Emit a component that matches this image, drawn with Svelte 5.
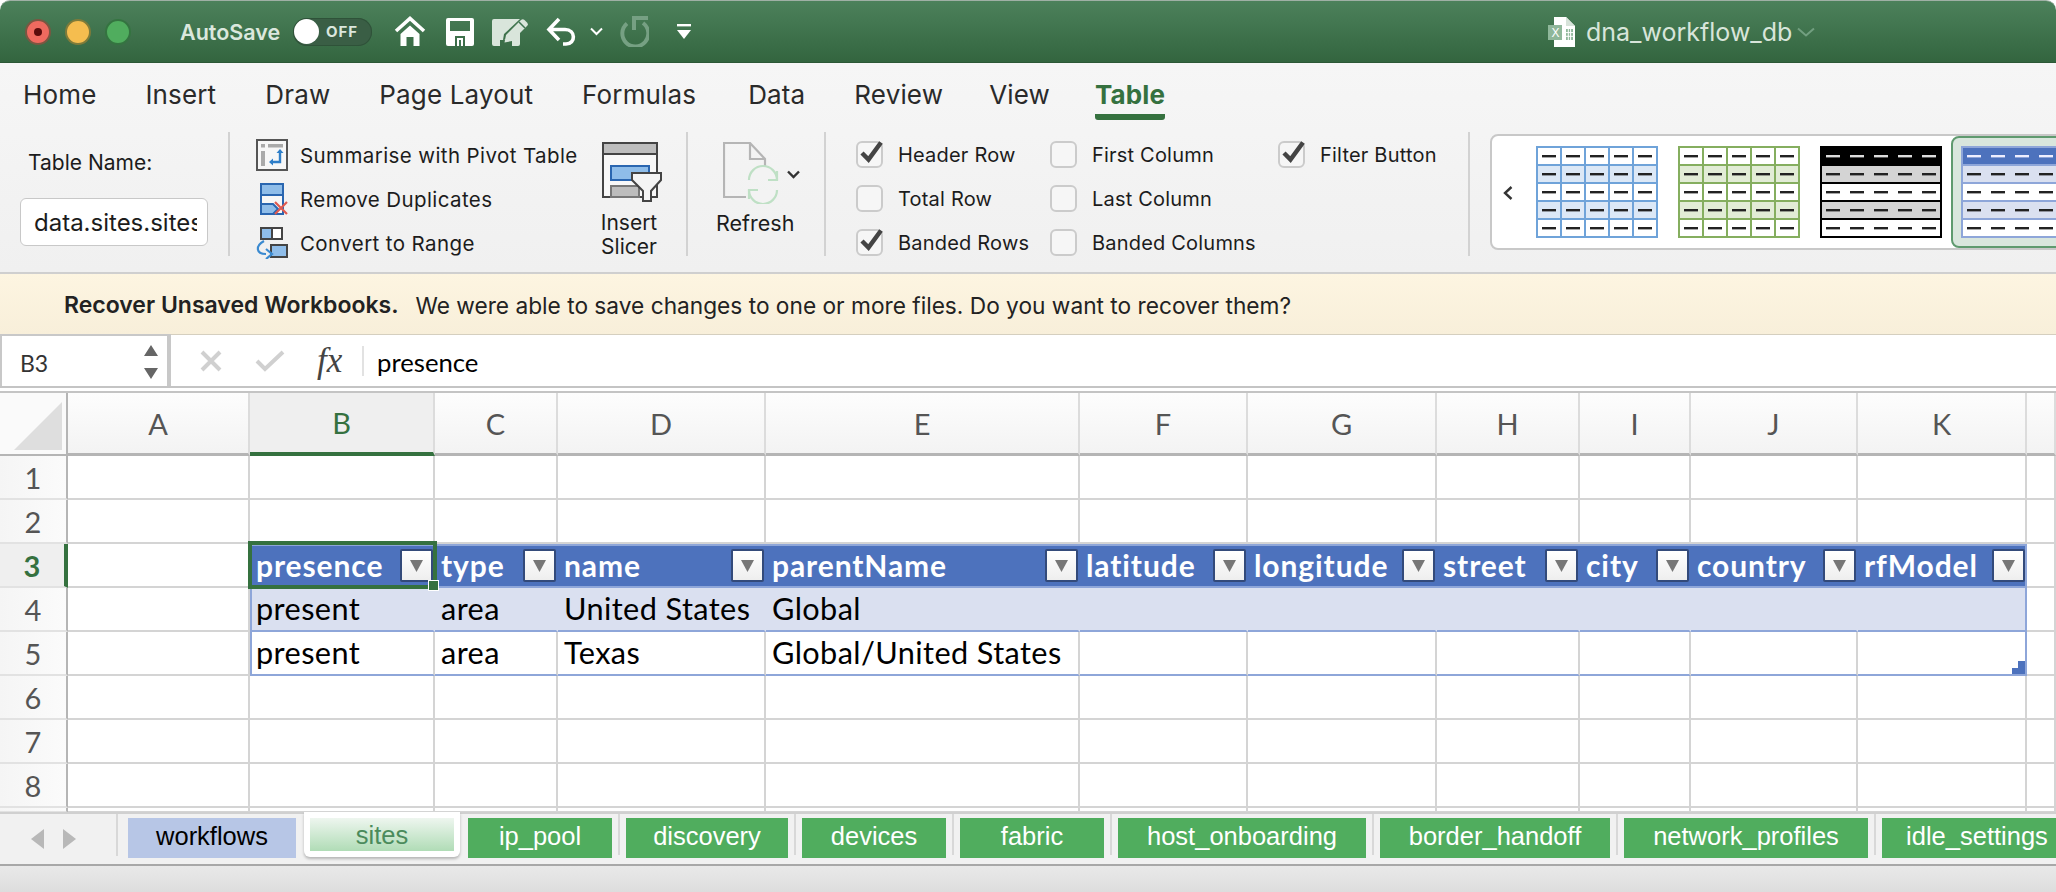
<script>
  const tabs = ['Home','Insert','Draw','Page Layout','Formulas','Data','Review','View'];
  const letters = ['A','B','C','D','E','F','G','H','I','J','K'];
  const headers = ['presence','type','name','parentName','latitude','longitude','street','city','country','rfModel'];
  const rowData = {
    4: ['present','area','United States','Global','','','','','',''],
    5: ['present','area','Texas','Global/United States','','','','','','']
  };
  const rows = [1,2,3,4,5,6,7,8,9];
  const sheets = [
    {n:'ip_pool',w:144},{n:'discovery',w:162},{n:'devices',w:144},{n:'fabric',w:144},
    {n:'host_onboarding',w:248},{n:'border_handoff',w:230},{n:'network_profiles',w:244},{n:'idle_settings',w:190}
  ];
  const thumbs = [
    {border:'#6fa3d9',band:'#dce8f6',head:null,dash:'#222',hdash:'#222',v:true,line:'#6fa3d9'},
    {border:'#85ae5f',band:'#e2ecd6',head:null,dash:'#222',hdash:'#222',v:true,line:'#85ae5f'},
    {border:'#000',band:'#d4d4d4',head:'#000',dash:'#222',hdash:'#ddd',v:false,line:'#000'},
    {border:'#8ea6d9',band:'#dae0f0',head:'#4d72bd',dash:'#222',hdash:'#eef',v:false,line:'#8ea6d9'}
  ];
  const five = [0,1,2,3,4];
</script>

{#snippet check(on)}
  <svg class="cb" width="28" height="30" viewBox="0 0 28 30">
    <rect x="1" y="2" width="25" height="25" rx="5" fill="#f6f6f6" stroke="#cbcbcb" stroke-width="2"/>
    {#if on}<path d="M6 13 L12.5 19.5 L25 2.5" fill="none" stroke="#444" stroke-width="4.5"/>{/if}
  </svg>
{/snippet}

{#snippet thumb(t)}
  <svg class="thumb" width="122" height="92" viewBox="0 0 122 92">
    <rect width="122" height="92" fill="#fff"/>
    {#each five as r}
      {#if r === 0 && t.head}<rect x="1" y="1" width="120" height="18" fill={t.head}/>{/if}
      {#if r % 2 === 1}<rect x="1" y={1 + r*18} width="120" height="18" fill={t.band}/>{/if}
      {#each five as c}
        <rect x={6 + c*24} y={9 + r*18} width="14" height="2.4" fill={r === 0 ? t.hdash : t.dash}/>
      {/each}
      {#if r > 0}<rect x="0" y={r*18} width="122" height="2" fill={t.line}/>{/if}
    {/each}
    {#if t.v}
      {#each [1,2,3,4] as c}<rect x={c*24} y="0" width="2" height="92" fill={t.line}/>{/each}
    {/if}
    <rect x="1" y="1" width="120" height="90" fill="none" stroke={t.border} stroke-width="2"/>
  </svg>
{/snippet}

{#snippet funnelBtn()}
  <span class="fbtn"><svg width="15" height="15" viewBox="0 0 15 15"><path d="M1 2 H14 L7.5 14 Z" fill="#777"/></svg></span>
{/snippet}

<div class="app">
  <header class="titlebar">
    <div class="lights">
      <span class="light red"><i></i></span><span class="light amber"></span><span class="light green"></span>
    </div>
    <span class="autosave">AutoSave</span>
    <span class="toggle"><span class="knob"></span><span class="off">OFF</span></span>
    <svg class="q-home" width="32" height="30" viewBox="0 0 32 30"><path d="M2 15 L16 2.5 L30 15" fill="none" stroke="#fff" stroke-width="3.6"/><path d="M6.5 18 L16 9.5 L25.5 18 V30 H19.5 V21 H12.5 V30 H6.5 Z" fill="#fff"/></svg>
    <svg class="q-save" width="28" height="28" viewBox="0 0 28 28"><path fill-rule="evenodd" d="M2 0 H26 a2 2 0 0 1 2 2 V26 a2 2 0 0 1 -2 2 H2 a2 2 0 0 1 -2 -2 V2 a2 2 0 0 1 2 -2 Z M4 3 V13 H24 V3 Z M9 28 H19 V18 H9 Z" fill="#fff"/><rect x="11" y="20" width="6" height="8" fill="#fff"/><rect x="13" y="22" width="2" height="6" fill="#3d7350"/></svg>
    <svg class="q-edit" width="36" height="28" viewBox="0 0 36 28"><path fill-rule="evenodd" d="M2 1 H28 L12 16 L11 22 L18 21 L28 12 V26 a2 2 0 0 1 -2 2 H20 V22 H8 V28 H2 a2 2 0 0 1 -2 -2 V3 a2 2 0 0 1 2 -2 Z" fill="#d9e5db"/><path d="M14 17 L29 2 a2.5 2.5 0 0 1 3.5 0 L35 4.5 a2.5 2.5 0 0 1 0 3.5 L20 23 L12.5 24.5 Z" fill="#d9e5db"/><path d="M27 4 L33 10" stroke="#3d7350" stroke-width="1.5"/></svg>
    <svg class="q-undo" width="30" height="30" viewBox="0 0 30 30"><path d="M13 2 L3 12.5 L13 23 M3 12.5 H19 C30 12.5 30 27 20 27 H17" fill="none" stroke="#fff" stroke-width="3.6"/></svg>
    <svg class="q-chev" width="13" height="9" viewBox="0 0 13 9"><path d="M1 1.5 L6.5 7 L12 1.5" fill="none" stroke="#fff" stroke-width="2"/></svg>
    <svg class="q-redo" width="31" height="31" viewBox="0 0 31 31"><path d="M9 7.5 A13 13 0 1 0 25 7" fill="none" stroke="#76a083" stroke-width="4"/><path d="M30 2 H16 V14" fill="none" stroke="#76a083" stroke-width="4"/></svg>
    <svg class="q-more" width="14" height="16" viewBox="0 0 14 16"><rect width="14" height="2.4" fill="#fff"/><path d="M0 6 H14 L7 15 Z" fill="#fff"/></svg>
    <span class="docicon"><svg width="27" height="30" viewBox="0 0 27 30"><path d="M6 0 H18 L27 9 V30 H6 Z" fill="#fff"/><path d="M18 0 L27 9 H18 Z" fill="#d7e3da"/><rect x="0" y="8" width="14" height="15" fill="#8fb79a"/><path d="M18 12 H25 V23 H18 Z" fill="#8fb79a"/><path d="M20.3 12 V23 M22.6 12 V23 M18 15.6 H25 M18 19.3 H25" stroke="#fff" stroke-width="1"/><text x="3.5" y="20" font-size="12" fill="#fff" font-family="Liberation Sans, sans-serif">X</text></svg></span>
    <span class="docname">dna_workflow_db</span>
    <svg class="q-docchev" width="18" height="10" viewBox="0 0 18 10"><path d="M1 1.5 L9 8.5 L17 1.5" fill="none" stroke="#729f80" stroke-width="2"/></svg>
  </header>

  <section class="ribbon">
    <nav class="tabs">
      {#each tabs as t}<span class="tab">{t}</span>{/each}
      <span class="tab active">Table</span>
    </nav>
    <div class="rbody">
      <div class="g g-name">
        <span class="lbl">Table Name:</span>
        <span class="namebox"><span>data.sites.sites</span></span>
      </div>
      <div class="g g-tools">
        <div class="tool">
          <svg width="32" height="32" viewBox="0 0 32 32"><rect x="1" y="1" width="30" height="30" fill="#f7f7f7" stroke="#555" stroke-width="2"/><rect x="5" y="5" width="4" height="3.5" fill="#aaa"/><rect x="12" y="5" width="15" height="3.5" fill="#aaa"/><rect x="5" y="12" width="4" height="15" fill="#aaa"/><path d="M24 12 V23 H15" fill="none" stroke="#2f7fc9" stroke-width="2.4"/><path d="M20.5 14 L24 10 L27.5 14 Z M17 19.5 L13 23 L17 26.5 Z" fill="#2f7fc9"/></svg>
          <span>Summarise with Pivot Table</span>
        </div>
        <div class="tool">
          <svg width="32" height="32" viewBox="0 0 32 32"><rect x="5" y="1" width="22" height="30" fill="#f7f7f7" stroke="#2a66b0" stroke-width="2"/><rect x="5" y="1" width="22" height="11" fill="#8fbde9" stroke="#2a66b0" stroke-width="2"/><path d="M5 21 H17 L22 26 L17 31 H5 Z" fill="#8fbde9" stroke="#2a66b0" stroke-width="2"/><path d="M19 19 L31 31 M31 19 L19 31" stroke="#e05a50" stroke-width="2.2"/></svg>
          <span>Remove Duplicates</span>
        </div>
        <div class="tool">
          <svg width="32" height="32" viewBox="0 0 32 32"><rect x="5" y="1" width="21" height="11" fill="#fff" stroke="#444" stroke-width="2"/><rect x="5" y="1" width="11" height="11" fill="#8fbde9" stroke="#444" stroke-width="2"/><path d="M15 18 H31 V30 H15 Z" fill="#8fbde9" stroke="#444" stroke-width="2"/><path d="M8 14 C-1 19 0 27 10 27" fill="none" stroke="#3b8ad0" stroke-width="2.2"/><path d="M10 22 L16 27 L10 32" fill="none" stroke="#3b8ad0" stroke-width="2.2"/></svg>
          <span>Convert to Range</span>
        </div>
      </div>
      <div class="g g-slicer">
        <svg width="60" height="60" viewBox="0 0 60 60"><rect x="1" y="1" width="54" height="54" fill="#f8f8f8" stroke="#444" stroke-width="2"/><rect x="1" y="1" width="54" height="11" fill="#bdbdbd" stroke="#444" stroke-width="2"/><rect x="9" y="24" width="38" height="14" fill="#8fbde9" stroke="#2a66b0" stroke-width="2"/><rect x="9" y="44" width="28" height="11" fill="#bdbdbd" stroke="#777" stroke-width="2"/><path d="M30 31 H59 V38 L49 49 V59 H41 V49 L30 38 Z" fill="#f4f4f4" stroke="#444" stroke-width="2"/></svg>
        <span class="big">Insert<br/>Slicer</span>
      </div>
      <div class="g g-refresh">
        <div class="refresh-ic">
          <svg width="58" height="62" viewBox="0 0 58 62"><path d="M23 55 H1 V1 H27 L42 17 V30 M27 1 V17 H42" fill="none" stroke="#b5b5b5" stroke-width="2.2"/><path d="M54 38 A14 14 0 0 0 26 38 M26 48 A14 14 0 0 0 54 48" fill="#f3f3f3" stroke="#bfe0c5" stroke-width="2.2"/><path d="M45 38 H54 V29 M35 48 H26 V57" fill="none" stroke="#bfe0c5" stroke-width="2.2"/></svg>
          <svg class="rchev" width="13" height="9" viewBox="0 0 13 9"><path d="M1 1.5 L6.5 7 L12 1.5" fill="none" stroke="#333" stroke-width="2.4"/></svg>
        </div>
        <span class="big">Refresh</span>
      </div>
      <div class="g g-checks">
        <div class="chk-col c1">
          <label class="chk">{@render check(true)}<span>Header Row</span></label>
          <label class="chk">{@render check(false)}<span>Total Row</span></label>
          <label class="chk">{@render check(true)}<span>Banded Rows</span></label>
        </div>
        <div class="chk-col c2">
          <label class="chk">{@render check(false)}<span>First Column</span></label>
          <label class="chk">{@render check(false)}<span>Last Column</span></label>
          <label class="chk">{@render check(false)}<span>Banded Columns</span></label>
        </div>
        <div class="chk-col c3">
          <label class="chk">{@render check(true)}<span>Filter Button</span></label>
        </div>
      </div>
      <div class="gallery">
        <svg class="gchev" width="10" height="14" viewBox="0 0 10 14"><path d="M8.5 1 L2 7 L8.5 13" fill="none" stroke="#333" stroke-width="2.4"/></svg>
        {@render thumb(thumbs[0])}
        {@render thumb(thumbs[1])}
        {@render thumb(thumbs[2])}
        <span class="sel-frame">{@render thumb(thumbs[3])}</span>
      </div>
    </div>
  </section>

  <div class="msgbar"><b>Recover Unsaved Workbooks.</b><span>We were able to save changes to one or more files. Do you want to recover them?</span></div>

  <div class="formula">
    <div class="namecell">
      <span>B3</span>
      <svg width="16" height="34" viewBox="0 0 16 34"><path d="M1 11 L8 0 L15 11 Z M1 23 H15 L8 34 Z" fill="#666"/></svg>
    </div>
    <svg class="f-x" width="22" height="22" viewBox="0 0 22 22"><path d="M2 2 L20 20 M20 2 L2 20" stroke="#d0d0d0" stroke-width="4"/></svg>
    <svg class="f-c" width="30" height="22" viewBox="0 0 30 22"><path d="M2 11 L10 19 L28 2" fill="none" stroke="#d0d0d0" stroke-width="4"/></svg>
    <span class="fx"><i>fx</i></span>
    <span class="fsep"></span>
    <span class="ftext">presence</span>
  </div>

  <div class="sheet">
    <div class="gridhead">
      <div class="corner"><svg width="48" height="48" viewBox="0 0 48 48"><path d="M48 0 V48 H0 Z" fill="#dedede"/></svg></div>
      {#each letters as l}<div class="colh" class:csel={l === 'B'}>{l}</div>{/each}
      <div class="colh"></div>
    </div>
    {#each rows as r}
      <div class="gridrow" class:short={r === 9}>
        <div class="rowh" class:rsel={r === 3}>{r < 9 ? r : ''}</div>
        <div class="cell"></div>
        {#if r === 3}
          {#each headers as h, i}
            <div class="cell thead" class:last={i === 9}><span>{h}</span>{@render funnelBtn()}</div>
          {/each}
        {:else if rowData[r]}
          {#each rowData[r] as v, i}
            <div class="cell tb" class:band={r === 4} class:first={i === 0} class:last={i === 9} class:end={r === 5}>
              <span>{v}</span>
              {#if r === 5 && i === 9}<svg class="resize" width="13" height="13" viewBox="0 0 13 13"><path d="M6 0 H13 V13 H0 V7 H6 Z" fill="#4d72bd"/></svg>{/if}
            </div>
          {/each}
        {:else}
          {#each headers as h}<div class="cell"></div>{/each}
        {/if}
        <div class="cell"></div>
      </div>
    {/each}
    <div class="selbox"><i></i></div>
  </div>

  <div class="sheetbar">
    <div class="nav">
      <svg width="15" height="20" viewBox="0 0 15 20"><path d="M14 0 V20 L1 10 Z" fill="#b8b8b8"/></svg>
      <svg width="15" height="20" viewBox="0 0 15 20"><path d="M1 0 V20 L14 10 Z" fill="#b8b8b8"/></svg>
    </div>
    <span class="stab blue">workflows</span>
    <span class="stab active"><span>sites</span></span>
    {#each sheets as s, i}
      <span class="stab green" style="width:{s.w}px">{s.n}</span>
      {#if i < sheets.length - 1}<span class="ssep"></span>{/if}
    {/each}
  </div>
  <div class="status"></div>
</div>

<style>
  :global(body) { margin: 0; background: #fff; }
  .app { width: 2056px; height: 892px; overflow: hidden; display: flex; flex-direction: column; font-family: Inter, "Liberation Sans", sans-serif; color: #1c1c1c; background: #fff; }
  svg { display: block; flex: none; }

  .titlebar { height: 63px; flex: none; display: flex; align-items: center; box-sizing: border-box; background: linear-gradient(#4c815b, #33653f); border-top: 1px solid #9fb0a5; border-bottom: 1px solid #2c5836; border-radius: 10px 10px 0 0; position: relative; }
  .lights { display: flex; gap: 14px; margin-left: 25px; }
  .light { width: 26px; height: 26px; box-sizing: border-box; border-radius: 50%; border: 2px solid rgba(30,70,40,.55); display: flex; align-items: center; justify-content: center; }
  .red { background: #ee6a5f; } .amber { background: #f5bd4f; } .green { background: #61c554; }
  .red i { width: 8px; height: 8px; border-radius: 50%; background: #5a0c0c; }
  .autosave { margin-left: 49px; font-size: 21.5px; font-weight: 600; color: #dbe7dd; width: 113px; }
  .toggle { width: 79px; height: 28px; border-radius: 14px; background: #3a5e45; display: flex; align-items: center; box-shadow: inset 0 0 0 1px #2f5239; }
  .knob { width: 25px; height: 25px; margin-left: 1px; border-radius: 50%; background: #fff; }
  .off { margin-left: 7px; font-size: 15px; font-weight: 700; letter-spacing: 1px; color: #dbe7dd; }
  .q-home { margin-left: 22px; margin-top: -1px; }
  .q-save { margin-left: 20px; }
  .q-edit { margin-left: 18px; }
  .q-undo { margin-left: 18px; }
  .q-chev { margin-left: 14px; }
  .q-redo { margin-left: 15px; }
  .q-more { margin-left: 28px; }
  .docicon { margin-left: 857px; }
  .docname { margin-left: 11px; font-size: 25px; color: #d8e5da; }
  .q-docchev { margin-left: 5px; }

  .ribbon { height: 211px; flex: none; box-sizing: border-box; background: linear-gradient(#f6f6f6, #f0f0f0); border-bottom: 2px solid #cfcfcf; }
  .tabs { height: 69px; display: flex; gap: 49px; padding-left: 23px; box-sizing: border-box; }
  .tab { font-size: 26px; letter-spacing: .15px; line-height: 30px; margin-top: 17px; color: #2a2a2a; height: 40px; }
  .tab:nth-child(6) { margin-left: 3px; }
  .tab:nth-child(8) { margin-left: -3px; }
  .tab.active { margin-left: -4px; font-weight: 700; color: #35713f; border-bottom: 6px solid #35713f; border-radius: 0 0 3px 3px; box-sizing: content-box; height: 34px; }
  .rbody { height: 124px; display: flex; }
  .g { box-sizing: border-box; height: 124px; border-right: 2px solid #d2d2d2; flex: none; }
  .g-name { width: 230px; padding-left: 20px; display: flex; flex-direction: column; }
  .lbl { font-size: 21px; line-height: 24px; margin: 19px 0 0 8px; }
  .namebox { margin-top: 23px; width: 188px; height: 48px; box-sizing: border-box; background: #fff; border: 1px solid #c8c8c8; border-radius: 6px; padding: 0 10px 0 13px; display: flex; align-items: center; font-size: 24px; overflow: hidden; white-space: nowrap; }
  .namebox span { overflow: hidden; }
  .g-tools { width: 372px; padding-left: 26px; display: flex; flex-direction: column; gap: 12px; padding-top: 7px; position: relative; border-right: none; }
  .tool { height: 32px; display: flex; align-items: center; gap: 12px; font-size: 20.5px; letter-spacing: .4px; white-space: nowrap; }
  .g-slicer { width: 86px; display: flex; flex-direction: column; align-items: center; padding-top: 10px; padding-right: 25px; margin-left: 0; box-sizing: border-box; }
  .big { font-size: 21px; line-height: 24px; text-align: center; margin: 9px 5px 0 0; }
  .g-refresh { width: 138px; padding: 10px 0 0 28px; }
  .refresh-ic { display: flex; align-items: flex-start; margin-left: 7px; gap: 6px; }
  .rchev { margin-top: 28px; }
  .g-refresh .big { text-align: left; margin: 7px 0 0 0; display: block; font-size: 21.5px; }
  .g-checks { width: 644px; display: flex; padding-left: 30px; }
  .chk-col { display: flex; flex-direction: column; gap: 14px; padding-top: 8px; }
  .c1 { width: 194px; } .c2 { width: 228px; }
  .chk { display: flex; align-items: center; gap: 14px; height: 30px; font-size: 20px; letter-spacing: .2px; white-space: nowrap; }
  .gallery { margin: 2px 0 0 20px; width: 700px; height: 116px; flex: none; box-sizing: border-box; background: #fff; border: 2px solid #c8c8c8; border-radius: 8px; display: flex; align-items: center; gap: 20px; padding-left: 44px; position: relative; }
  .gchev { position: absolute; left: 11px; top: 50px; }
  .sel-frame { display: block; margin-left: -11px; padding: 8px; background: #d9e6dd; border: 2px solid #5f9a6f; border-radius: 8px; }

  .msgbar { height: 61px; flex: none; box-sizing: border-box; background: linear-gradient(#fdf5e1, #f8efda); border-bottom: 1px solid #d5cfbf; display: flex; align-items: center; padding: 2px 0 0 64px; gap: 17px; font-size: 23px; color: #222; }
  .msgbar b { font-weight: 600; }
  .msgbar span { font-size: 22.7px; }

  .formula { height: 58px; flex: none; box-sizing: border-box; display: flex; align-items: center; border-bottom: 2px solid #c4c4c4; position: relative; background: #fff; padding-bottom: 5px; }
  .formula::after { content: ""; position: absolute; left: 0; right: 0; bottom: 3px; height: 2px; background: #c4c4c4; }
  .namecell { width: 171px; height: 53px; box-sizing: border-box; flex: none; border: 2px solid #c8c8c8; border-width: 2px 4px 0 2px; display: flex; align-items: center; justify-content: space-between; padding: 0 8px 0 18px; font-family: Lato, sans-serif; font-size: 23px; color: #333; }
  .namecell span { margin-top: 2px; }
  .f-x { margin-left: 29px; }
  .f-c { margin-left: 33px; }
  .fx { margin-left: 32px; font-family: "Liberation Serif", serif; font-size: 35px; line-height: 40px; color: #444; width: 45px; }
  .fsep { width: 2px; height: 30px; background: #e2e2e2; }
  .ftext { margin: 2px 0 0 13px; font-family: Lato, sans-serif; font-size: 25.7px; color: #000; }

  .sheet { flex: 1; min-height: 0; position: relative; overflow: hidden; font-family: Lato, sans-serif; }
  .gridhead, .gridrow { display: grid; grid-template-columns: 68px 182px 185px 123px 208px 314px 168px 189px 143px 111px 167px 169px 1fr; }
  .gridhead { height: 63px; }
  .gridrow { height: 44px; }
  .gridrow.short { height: 5px; }
  .corner { box-sizing: border-box; border-right: 2px solid #b5b5b5; border-bottom: 2px solid #b5b5b5; padding: 9px 0 0 14px; background: #fafafa; }
  .colh { box-sizing: border-box; border-right: 2px solid #dcdcdc; border-bottom: 3px solid #b5b5b5; background: linear-gradient(#fdfdfd, #f3f3f3); display: flex; align-items: center; justify-content: center; font-size: 29px; color: #555; }
  .colh.csel { background: #efefef; color: #35713f; border-bottom: 4px solid #35713f; }
  .rowh { box-sizing: border-box; border-right: 2px solid #b5b5b5; border-bottom: 2px solid #e2e2e2; background: linear-gradient(90deg, #f5f5f5, #fbfbfb); display: flex; align-items: center; justify-content: center; font-size: 29px; color: #555; overflow: hidden; }
  .rowh.rsel { background: #efefef; color: #35713f; border-right: 4px solid #35713f; font-weight: 700; }
  .cell { box-sizing: border-box; border-right: 2px solid #d4d4d4; border-bottom: 2px solid #d4d4d4; display: flex; align-items: center; justify-content: space-between; padding: 0 2px 0 6px; font-size: 30.7px; letter-spacing: .4px; color: #000; white-space: nowrap; min-width: 0; }
  .cell > span { margin-top: -2px; }
  .thead { background: #4d72bd; color: #fff; font-weight: 700; font-size: 30px; letter-spacing: .9px; border-right: none; border-bottom: 2px solid #8ea6d9; border-top: 2px solid #8ea6d9; padding-right: 2px; }
  .thead.last { border-right: 2px solid #8ea6d9; padding-right: 0; }
  .fbtn { width: 33px; height: 33px; box-sizing: border-box; flex: none; background: linear-gradient(#fff, #eee); border: 2px solid #334a7a; border-radius: 2px; display: flex; align-items: center; justify-content: center; }
  .tb { position: relative; }
  .tb.first { border-left: 2px solid #8ea6d9; padding-left: 4px; }
  .tb.last { border-right: 2px solid #8ea6d9; }
  .band { background: #dae0f0; border-right-color: #dae0f0; border-bottom: 2px solid #8ea6d9; }
  .band.last { border-right-color: #8ea6d9; }
  .end { border-bottom: 2px solid #8ea6d9; }
  .resize { position: absolute; right: 0; bottom: 0; }
  .selbox { position: absolute; left: 248px; top: 148px; width: 189px; height: 48px; box-sizing: border-box; border: 4px solid #35713f; pointer-events: none; }
  .selbox i { position: absolute; right: -6px; bottom: -6px; width: 9px; height: 9px; background: #35713f; border: 1px solid #fff; }

  .sheetbar { height: 54px; flex: none; box-sizing: border-box; background: #f1f1f1; border-top: 2px solid #d0d0d0; border-bottom: 2px solid #a8a8a8; display: flex; padding-top: 4px; font-family: "Liberation Sans", sans-serif; font-size: 25.5px; }
  .nav { width: 118px; height: 42px; margin-top: -4px; box-sizing: border-box; padding: 15px 0 0 30px; display: flex; gap: 17px; border-right: 2px solid #d8d8d8; flex: none; margin-right: 10px; }
  .stab { height: 40px; display: flex; align-items: center; justify-content: center; flex: none; box-sizing: border-box; white-space: nowrap; padding-bottom: 4px; }
  .blue { width: 168px; background: #b7c6e6; color: #000; }
  .stab.active { width: 156px; height: 45px; margin: -6px 8px 0 8px; background: #fff; padding: 6px 6px 6px; border-radius: 0 0 6px 6px; box-shadow: 0 2px 3px rgba(0,0,0,.25); display: block; }
  .stab.active span { display: flex; align-items: center; justify-content: center; height: 33px; padding-top: 2px; box-sizing: border-box; background: linear-gradient(#eef6ef, #b0dcb6); color: #4b8b5c; }
  .green { background: #50ad5e; color: #fff; }
  .ssep { width: 2px; height: 41px; margin: -4px 6px 0; background: #d8d8d8; flex: none; }
  .status { height: 26px; flex: none; background: linear-gradient(#e9e9e9, #dddddd); }
</style>
